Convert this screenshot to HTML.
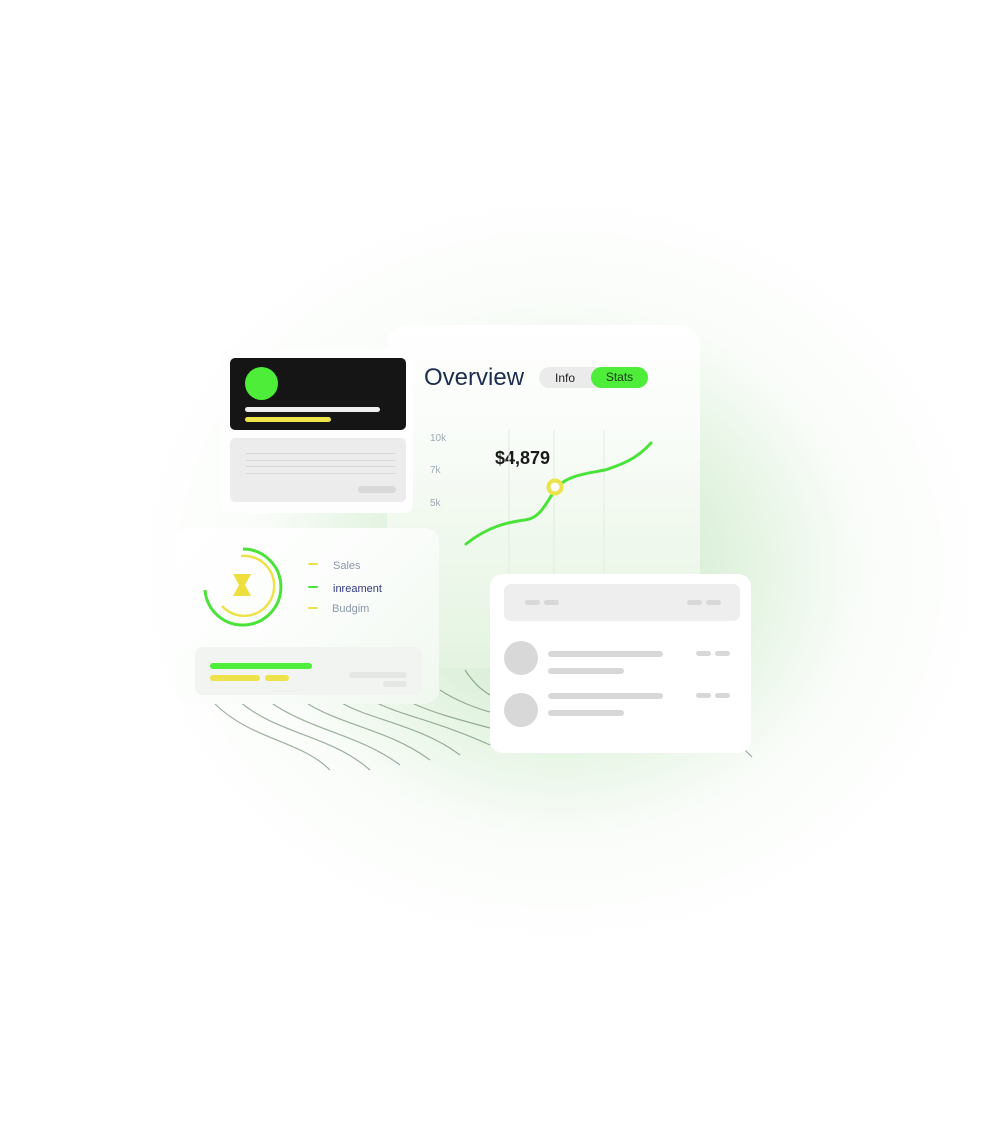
<!DOCTYPE html>
<html><head><meta charset="utf-8"><style>
*{margin:0;padding:0;box-sizing:border-box}
body{width:1008px;height:1148px;overflow:hidden;background:#fff;font-family:"Liberation Sans",sans-serif;position:relative}
.glow{position:absolute;left:0;top:0;width:1008px;height:1148px;background:radial-gradient(ellipse 430px 380px at 560px 570px,rgba(165,215,160,.65) 0%,rgba(190,228,185,.45) 40%,rgba(225,242,222,.2) 70%,rgba(255,255,255,0) 100%)}
.abs{position:absolute}
.card{position:absolute;background:#fff;border-radius:14px}
.bar{position:absolute;border-radius:4px}
</style></head><body>
<div class="glow"></div>
<svg class="abs" style="left:0;top:0" width="1008" height="1148">
<g fill="none" stroke="#5f7d62" stroke-width="1.2" opacity=".6">
<path d="M213 702 C250 740,300 740,330 770"/>
<path d="M240 702 C280 735,330 735,370 770"/>
<path d="M270 702 C310 730,360 735,400 765"/>
<path d="M305 702 C340 725,390 730,430 760"/>
<path d="M340 702 C370 720,420 725,460 755"/>
<path d="M375 702 C400 715,440 722,490 745"/>
<path d="M410 702 C430 712,460 720,490 728"/>
<path d="M440 690 C455 700,475 708,490 712"/>
<path d="M465 670 C475 685,482 690,490 695"/>
<path d="M740 745 L752 757"/>
</g></svg>
<div class="card" style="left:387px;top:325px;width:313px;height:343px;border-radius:20px 20px 0 0;background:linear-gradient(180deg,#fff 0%,#f8fcf7 35%,#e4f4e1 100%)"></div>
<div class="abs" style="left:424px;top:364px;font-size:24px;color:#1d2d4f">Overview</div>
<div class="abs" style="left:539px;top:367px;width:109px;height:21px;border-radius:11px;background:#ebebeb"></div>
<div class="abs" style="left:555px;top:371px;font-size:12px;color:#222">Info</div>
<div class="abs" style="left:591px;top:367px;width:57px;height:21px;border-radius:11px;background:#4ded3a;font-size:12px;color:#1c3a1a;text-align:center;line-height:21px">Stats</div>
<div class="abs" style="left:430px;top:433px;font-size:10px;color:#a0aab5">10k</div>
<div class="abs" style="left:430px;top:465px;font-size:10px;color:#a0aab5">7k</div>
<div class="abs" style="left:430px;top:498px;font-size:10px;color:#a0aab5">5k</div>
<div class="abs" style="left:495px;top:448px;font-size:18px;font-weight:bold;color:#1a1a1a">$4,879</div>
<svg class="abs" style="left:0;top:0" width="1008" height="1148">
<g stroke="#e2ebe0" stroke-width="1"><line x1="509" y1="430" x2="509" y2="668"/><line x1="554" y1="430" x2="554" y2="668"/><line x1="604" y1="430" x2="604" y2="668"/></g>
<path d="M466 544 C490 525,510 522,525 520 C540 518,545 505,555 490 C565 475,590 473,605 470 C630 462,640 455,651 443" fill="none" stroke="#4be33a" stroke-width="3" stroke-linecap="round"/>
<circle cx="555" cy="487" r="6.5" fill="#fff" stroke="#ede24a" stroke-width="4"/>
</svg>
<div class="card" style="left:221px;top:349px;width:192px;height:164px;border-radius:8px;background:#fdfefd"></div>
<div class="abs" style="left:230px;top:358px;width:176px;height:72px;border-radius:5px;background:#151515"></div>
<div class="abs" style="left:245px;top:367px;width:33px;height:33px;border-radius:50%;background:#4ded3a"></div>
<div class="bar" style="left:245px;top:407px;width:135px;height:5px;background:#eee"></div>
<div class="bar" style="left:245px;top:417px;width:86px;height:5px;background:#ede44a"></div>
<div class="abs" style="left:230px;top:438px;width:176px;height:64px;border-radius:5px;background:#ececec"></div>
<div class="abs" style="left:246px;top:453px;width:150px;height:1px;background:#d8d8d8"></div>
<div class="abs" style="left:246px;top:460px;width:150px;height:1px;background:#d8d8d8"></div>
<div class="abs" style="left:246px;top:466px;width:150px;height:1px;background:#d8d8d8"></div>
<div class="abs" style="left:246px;top:473px;width:150px;height:1px;background:#d8d8d8"></div>
<div class="bar" style="left:358px;top:486px;width:38px;height:7px;background:#d8d8d8"></div>
<div class="card" style="left:176px;top:528px;width:263px;height:176px;background:linear-gradient(135deg,#fff 0%,#fbfdfb 50%,#f0f8ef 100%)"></div>
<svg class="abs" style="left:0;top:0" width="1008" height="1148">
<path d="M243 549 A38 38 0 1 1 205 590" fill="none" stroke="#4be33a" stroke-width="3"/>
<path d="M241 556 A30 30 0 1 1 222 606" fill="none" stroke="#eee24a" stroke-width="2.5"/>
<path d="M233 574 h18 l-6 11 l6 11 h-18 l6 -11 z" fill="#eedf3e"/>
</svg>
<div class="bar" style="left:308px;top:563px;width:10px;height:2px;background:#eee24a"></div>
<div class="bar" style="left:308px;top:586px;width:10px;height:2px;background:#4be33a"></div>
<div class="bar" style="left:308px;top:607px;width:10px;height:2px;background:#eee24a"></div>
<div class="abs" style="left:333px;top:560px;font-size:11px;color:#8a97ab">Sales</div>
<div class="abs" style="left:333px;top:583px;font-size:11px;color:#343a80">inreament</div>
<div class="abs" style="left:332px;top:603px;font-size:11px;color:#8a97ab">Budgim</div>
<div class="abs" style="left:195px;top:647px;width:227px;height:48px;border-radius:8px;background:#f1f4f1"></div>
<div class="bar" style="left:210px;top:663px;width:102px;height:6px;background:#4ded3a"></div>
<div class="bar" style="left:210px;top:675px;width:50px;height:6px;background:#eee24a"></div>
<div class="bar" style="left:265px;top:675px;width:24px;height:6px;background:#eee24a"></div>
<div class="bar" style="left:349px;top:672px;width:58px;height:6px;background:#e4e7e4"></div>
<div class="bar" style="left:383px;top:681px;width:24px;height:6px;background:#e4e7e4"></div>
<div class="card" style="left:490px;top:574px;width:261px;height:179px;border-radius:13px"></div>
<div class="abs" style="left:504px;top:584px;width:236px;height:37px;border-radius:7px;background:#eee"></div>
<div class="bar" style="left:525px;top:600px;width:15px;height:5px;background:#d8d8d8"></div>
<div class="bar" style="left:544px;top:600px;width:15px;height:5px;background:#d8d8d8"></div>
<div class="bar" style="left:687px;top:600px;width:15px;height:5px;background:#d8d8d8"></div>
<div class="bar" style="left:706px;top:600px;width:15px;height:5px;background:#d8d8d8"></div>
<div class="abs" style="left:504px;top:641px;width:34px;height:34px;border-radius:50%;background:#d8d8d8"></div>
<div class="bar" style="left:548px;top:651px;width:115px;height:6px;background:#d8d8d8"></div>
<div class="bar" style="left:548px;top:668px;width:76px;height:6px;background:#d8d8d8"></div>
<div class="bar" style="left:696px;top:651px;width:15px;height:5px;background:#d8d8d8"></div>
<div class="bar" style="left:715px;top:651px;width:15px;height:5px;background:#d8d8d8"></div>
<div class="abs" style="left:504px;top:693px;width:34px;height:34px;border-radius:50%;background:#d8d8d8"></div>
<div class="bar" style="left:548px;top:693px;width:115px;height:6px;background:#d8d8d8"></div>
<div class="bar" style="left:548px;top:710px;width:76px;height:6px;background:#d8d8d8"></div>
<div class="bar" style="left:696px;top:693px;width:15px;height:5px;background:#d8d8d8"></div>
<div class="bar" style="left:715px;top:693px;width:15px;height:5px;background:#d8d8d8"></div>
</body></html>
